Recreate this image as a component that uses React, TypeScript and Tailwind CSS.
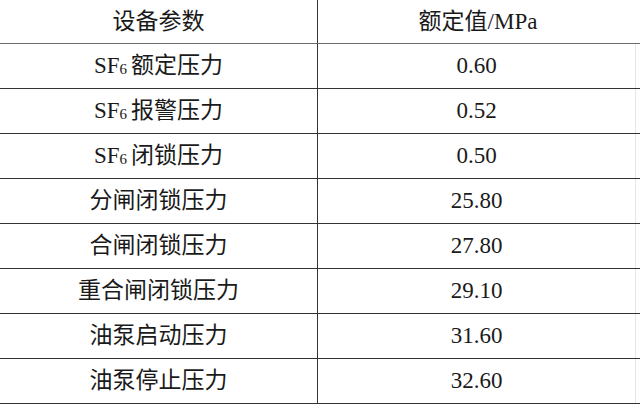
import React from 'react';

type Row = {
  name: React.ReactNode;
  value: string;
};

const Sf6 = ({ label }: { label: string }) => (
  <>
    SF<sub className="text-[15px] relative top-[1px] mr-[4px]">6</sub>
    {label}
  </>
);

const rows: Row[] = [
  { name: <Sf6 label="额定压力" />, value: '0.60' },
  { name: <Sf6 label="报警压力" />, value: '0.52' },
  { name: <Sf6 label="闭锁压力" />, value: '0.50' },
  { name: '分闸闭锁压力', value: '25.80' },
  { name: '合闸闭锁压力', value: '27.80' },
  { name: '重合闸闭锁压力', value: '29.10' },
  { name: '油泵启动压力', value: '31.60' },
  { name: '油泵停止压力', value: '32.60' },
];

export default function App() {
  return (
    <div
      className="w-[640px] h-[404px] bg-white overflow-hidden text-[#1a1a1a] text-[23px]"
      style={{ fontFamily: '"Liberation Serif", "Noto Sans CJK SC", serif' }}
    >
      {/* 表头 */}
      <div className="grid grid-cols-[318px_1fr] h-[44px] border-b border-[#6b6b6b]">
        <div className="flex items-center justify-center border-r border-[#333] pt-[1px]">设备参数</div>
        <div className="flex items-center justify-center pr-[2px] pt-[1px]">额定值/MPa</div>
      </div>

      {rows.map((row, i) => (
        <div
          key={i}
          className="grid grid-cols-[318px_1fr] h-[45px] border-b border-[#333]"
        >
          <div className="flex items-center justify-center border-r border-[#333]">
            <span>{row.name}</span>
          </div>
          <div className="flex items-center justify-center border-r border-[#e6e6e6] mr-[4px]">
            {row.value}
          </div>
        </div>
      ))}
    </div>
  );
}
